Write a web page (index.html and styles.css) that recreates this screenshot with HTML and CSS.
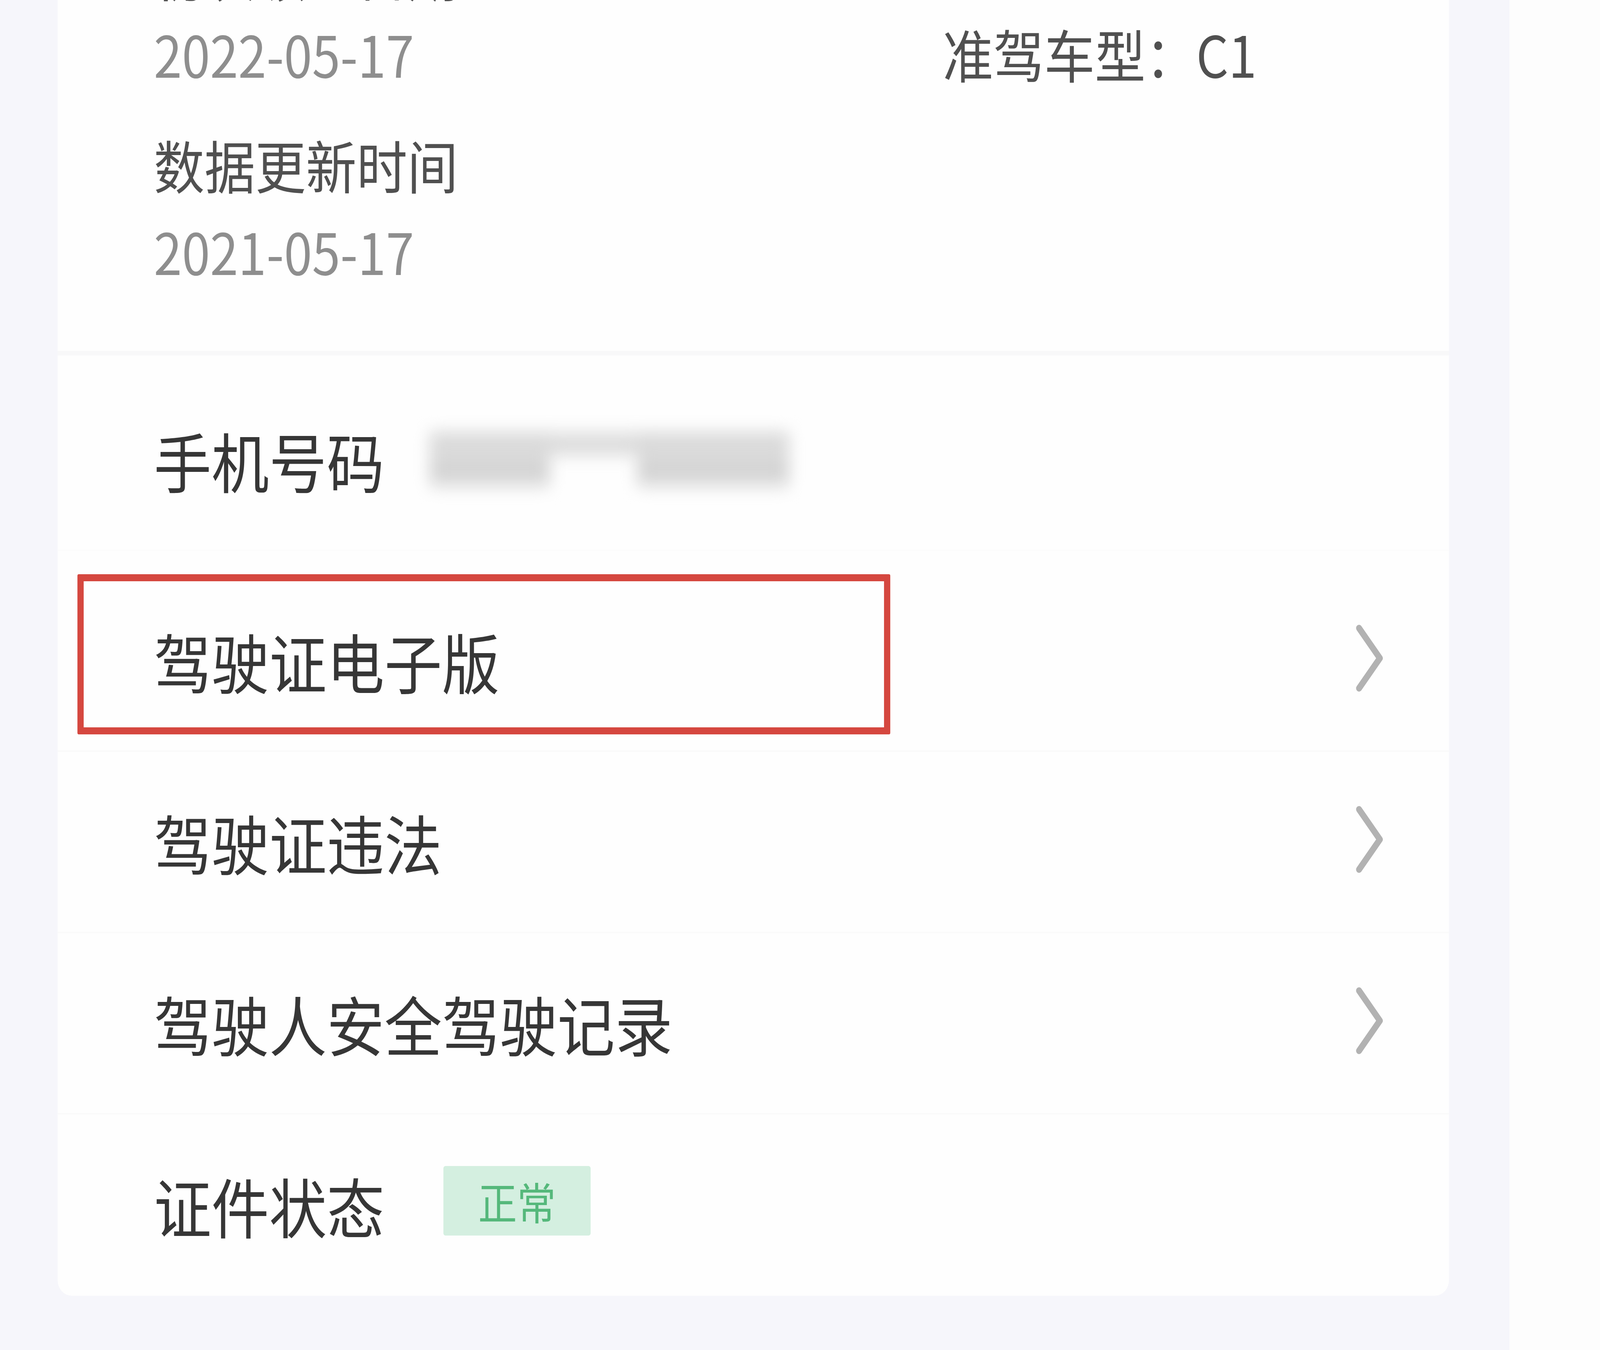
FILE: index.html
```html
<!DOCTYPE html>
<html lang="zh-CN">
<head>
<meta charset="utf-8">
<title>驾驶证信息</title>
<link rel="stylesheet" href="styles.css">
</head>
<body>
<div class="screen">
  <main class="page">
    <section class="card card-info">
      <div class="info-row row-a">
        <span class="info-cell label">初次领证日期</span>
      </div>
      <div class="info-row row-b">
        <span class="info-cell date">2022-05-17</span>
        <span class="info-cell label">准驾车型：C1</span>
      </div>
      <div class="info-row row-c">
        <span class="info-cell label">数据更新时间</span>
      </div>
      <div class="info-row row-d">
        <span class="info-cell date">2021-05-17</span>
      </div>
    </section>
    <div class="divider"></div>
    <section class="card card-list">
      <div class="list-row first">
        <span class="item-label">手机号码</span>
        <span class="phone-mask" aria-hidden="true">
          <span class="blob blob-l"></span>
          <span class="blob blob-m"></span>
          <span class="blob blob-r"></span>
        </span>
      </div>
      <div class="list-row marked">
        <span class="item-label">驾驶证电子版</span>
        <svg class="chev" viewBox="0 0 84 178" width="84" height="178"><polyline points="12,12 72,89 12,166"/></svg>
        <span class="mark-box"></span>
      </div>
      <div class="list-row">
        <span class="item-label">驾驶证违法</span>
        <svg class="chev" viewBox="0 0 84 178" width="84" height="178"><polyline points="12,12 72,89 12,166"/></svg>
      </div>
      <div class="list-row">
        <span class="item-label">驾驶人安全驾驶记录</span>
        <svg class="chev" viewBox="0 0 84 178" width="84" height="178"><polyline points="12,12 72,89 12,166"/></svg>
      </div>
      <div class="list-row last">
        <span class="item-label">证件状态</span>
        <span class="badge">正常</span>
      </div>
    </section>
  </main>
  <aside class="edge"></aside>
</div>
</body>
</html>
```
FILE: styles.css
```css
html, body {
  margin: 0;
  padding: 0;
  height: 3456px;
  overflow: hidden;
  background: #fdfdfd;
  font-family: "Noto Sans CJK SC", "Noto Sans", sans-serif;
}

.screen {
  display: flex;
  width: 4608px;
  height: 3456px;
  overflow: hidden;
  transform-origin: 0 0;
}

@media (max-width: 4500px) {
  .screen {
    transform: scaleX(0.888889);
  }
}

.page {
  width: 4347px;
  flex: none;
  box-sizing: border-box;
  background: #f6f6fb;
  padding: 0 174px 0 166px;
}

.edge {
  flex: 1;
  background: #fdfdfd;
}

.card {
  background: #fefefe;
}

.card-info {
  margin-top: -232px;
  padding: 60px 0 157px 277px;
}

.info-row {
  display: flex;
  height: 200px;
}

.row-b { margin-top: 8px; }
.row-c { margin-top: 84px; }
.row-d { margin-top: 21px; }

.info-cell {
  font-size: 146px;
  line-height: 200px;
  white-space: nowrap;
}

.info-cell:first-child {
  width: 2272px;
  flex: none;
}

.label {
  color: #505050;
}

.date {
  color: #8e8e8e;
}

.divider {
  height: 12px;
  background: #f8f8f9;
}

.card-list {
  padding-top: 37px;
  border-radius: 0 0 40px 40px;
}

.list-row {
  position: relative;
  display: flex;
  align-items: center;
  height: 464px;
  box-sizing: border-box;
  padding: 0 187px 0 277px;
  border-bottom: 4px solid #fafafa;
}

.list-row.first {
  margin-bottom: 50px;
  border-bottom-color: #fcfcfc;
}

.list-row.last {
  border-bottom: none;
}

.item-label {
  font-size: 166px;
  line-height: 464px;
  color: #363636;
  white-space: nowrap;
}

.chev {
  margin-left: auto;
  margin-bottom: 12px;
  flex: none;
}

.chev polyline {
  fill: none;
  stroke: #b2b2b2;
  stroke-width: 17;
  stroke-linecap: round;
  stroke-linejoin: round;
}

.phone-mask {
  display: flex;
  align-items: flex-start;
  margin-left: 130px;
  height: 136px;
  filter: blur(22px);
}

.blob {
  display: block;
  background: linear-gradient(180deg, #cfcfcf 0%, #e0e0e0 35%, #d2d2d2 60%, #dadada 100%);
}

.blob-l {
  width: 347px;
  height: 136px;
}

.blob-m {
  width: 250px;
  height: 55px;
  background: #dadada;
}

.blob-r {
  width: 439px;
  height: 136px;
}

.mark-box {
  position: absolute;
  left: 57px;
  top: 9px;
  width: 2341px;
  height: 410px;
  box-sizing: border-box;
  border: 18px solid #d5473f;
  border-radius: 4px;
}

.badge {
  margin-left: 170px;
  margin-bottom: 22px;
  width: 424px;
  height: 178px;
  box-sizing: border-box;
  display: flex;
  align-items: center;
  justify-content: center;
  background: #d4efe0;
  color: #55b87b;
  font-size: 112px;
  line-height: 178px;
  border-radius: 6px;
}
```
